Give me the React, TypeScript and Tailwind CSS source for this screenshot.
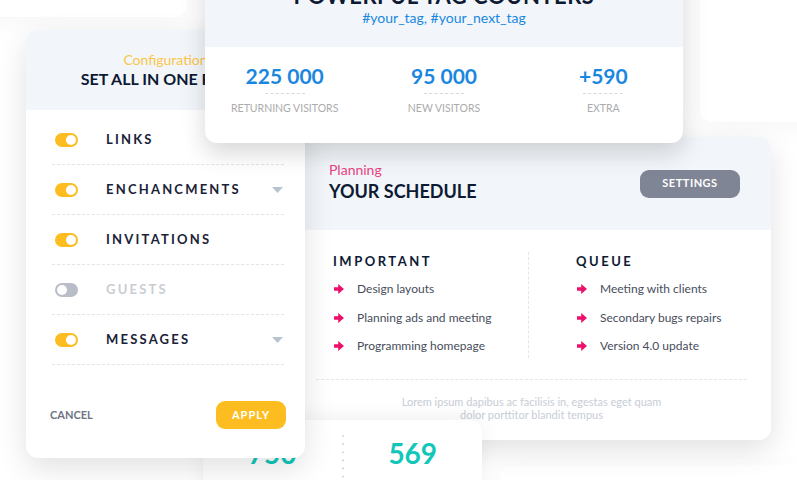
import React from "react";

const font = { fontFamily: "Lato, 'Open Sans', sans-serif" };

function Toggle({ on }: { on: boolean }) {
  return (
    <div
      className={`flex h-[14px] w-[23px] items-center rounded-full px-[2px] ${
        on ? "justify-end bg-[#fdbd21]" : "justify-start bg-[#b9bdc7]"
      }`}
    >
      <div className="h-[10px] w-[10px] rounded-full bg-white" />
    </div>
  );
}

function Caret() {
  return (
    <svg width="11" height="6" viewBox="0 0 11 6">
      <path d="M0 0 H11 L5.5 6 Z" fill="#b8c3cf" />
    </svg>
  );
}

function Arrow() {
  return (
    <svg width="10" height="10" viewBox="0 0 10 10" className="shrink-0">
      <path d="M0 3.3 H4.2 V0 L10 5 L4.2 10 V6.7 H0 Z" fill="#ec0f6c" />
    </svg>
  );
}

const rows = [
  { label: "LINKS", on: true, caret: false },
  { label: "ENCHANCMENTS", on: true, caret: true },
  { label: "INVITATIONS", on: true, caret: false },
  { label: "GUESTS", on: false, caret: false },
  { label: "MESSAGES", on: true, caret: true },
];

function Stat({ value, label }: { value: string; label: string }) {
  return (
    <div className="flex flex-1 flex-col items-center">
      <div className="text-[21px] font-bold leading-[28px] text-[#1a87df]">{value}</div>
      <div className="mt-[3px] w-[40px] border-t border-dashed border-[#d5d8dc]" />
      <div className="mt-[7px] text-[10.5px] leading-[14px] text-[#ababab]">{label}</div>
    </div>
  );
}

function Item({ text }: { text: string }) {
  return (
    <div className="flex items-center gap-[13px] pl-[1px] text-[12px] leading-[16px] text-[#474d5c]">
      <Arrow />
      <span>{text}</span>
    </div>
  );
}

export default function App() {
  return (
    <div className="relative h-[480px] w-[797px] overflow-hidden bg-white" style={font}>
      {/* faint background cards */}
      <div className="absolute left-[-40px] top-[-100px] h-[117px] w-[227px] rounded-[12px] bg-white shadow-[0_6px_24px_rgba(0,0,0,0.035)]" />
      <div className="absolute left-[700px] top-[-100px] h-[222px] w-[200px] rounded-[12px] bg-white shadow-[0_6px_24px_rgba(0,0,0,0.035)]" />
      <div className="absolute left-[500px] top-[465px] h-[100px] w-[330px] rounded-[12px] bg-white shadow-[0_6px_24px_rgba(0,0,0,0.035)]" />

      {/* schedule card */}
      <div className="absolute left-[292px] top-[137px] flex h-[303px] w-[479px] flex-col overflow-hidden rounded-[12px] bg-white shadow-[0_10px_30px_rgba(0,0,0,0.12)]">
        <div className="flex h-[93px] items-center justify-between bg-[#f2f6fa] pl-[37px] pr-[31px]">
          <div className="flex flex-col pb-[4px]">
            <div className="text-[14px] leading-[17px] text-[#ea4382]">Planning</div>
            <div className="mt-[2px] text-[18px] font-bold leading-[22px] text-[#0e1a33]">YOUR SCHEDULE</div>
          </div>
          <div className="flex h-[28px] w-[100px] items-center justify-center rounded-[9px] bg-[#7f8595] text-[11px] font-bold tracking-[0.5px] text-white">
            SETTINGS
          </div>
        </div>
        <div className="flex pl-[41px] pt-[22px]">
          <div className="flex w-[196px] flex-col border-r border-dashed border-[#e3e6ea] pb-[4px]">
            <div className="text-[13px] font-bold leading-[18px] tracking-[2.5px] text-[#0e1a33]">IMPORTANT</div>
            <div className="mt-[11px] flex flex-col gap-[12.5px]">
              {["Design layouts", "Planning ads and meeting", "Programming homepage"].map((t) => (
                <Item key={t} text={t} />
              ))}
            </div>
          </div>
          <div className="flex flex-col pl-[47px]">
            <div className="text-[13px] font-bold leading-[18px] tracking-[2.5px] text-[#0e1a33]">QUEUE</div>
            <div className="mt-[11px] flex flex-col gap-[12.5px]">
              {["Meeting with clients", "Secondary bugs repairs", "Version 4.0 update"].map((t) => (
                <Item key={t} text={t} />
              ))}
            </div>
          </div>
        </div>
        <div className="mx-[24px] mt-[21px] border-t border-dashed border-[#e3e6ea]" />
        <div className="mt-[15px] px-[100px] text-center text-[11px] leading-[13px] text-[#c7cdd6]">
          Lorem ipsum dapibus ac facilisis in, egestas eget quam
          <br />
          dolor porttitor blandit tempus
        </div>
      </div>

      {/* bottom card */}
      <div className="absolute left-[203px] top-[420px] flex h-[120px] w-[279px] rounded-[12px] bg-white shadow-[0_-4px_20px_rgba(0,0,0,0.06)]">
        <div className="flex flex-1 justify-center pt-[17px] text-[28px] font-bold leading-[32px] text-[#12c7b9]">
          750
        </div>
        <div className="pt-[15px]">
          <svg width="2" height="80" viewBox="0 0 2 80">
            <line x1="1" y1="1" x2="1" y2="80" stroke="#b7bfca" strokeWidth="1.6" strokeLinecap="round" strokeDasharray="0.1 8" />
          </svg>
        </div>
        <div className="flex flex-1 justify-center pt-[17px] text-[28px] font-bold leading-[32px] text-[#12c7b9]">
          569
        </div>
      </div>

      {/* config card */}
      <div className="absolute left-[26px] top-[30px] flex h-[428px] w-[279px] flex-col overflow-hidden rounded-[12px] bg-white shadow-[0_10px_30px_rgba(0,0,0,0.12)]">
        <div className="flex h-[80px] flex-col items-center justify-center bg-[#f2f6fa]">
          <div className="text-[14px] leading-[17px] text-[#fbc547]">Configuration</div>
          <div className="mt-[1px] text-[16px] font-bold leading-[20px] text-[#0e1a33]">SET ALL IN ONE PLACE</div>
        </div>
        <div className="ml-[26px] mr-[21px] mt-[5px] flex flex-col">
          {rows.map((r) => (
            <div key={r.label} className="flex h-[50px] items-center border-b border-dashed border-[#e1e4e8] pl-[3px] pr-[1px]">
              <Toggle on={r.on} />
              <div
                className={`ml-[28px] flex-1 text-[13px] font-bold tracking-[2.2px] ${
                  r.on ? "text-[#1a2238]" : "text-[#c9cdd3]"
                }`}
              >
                {r.label}
              </div>
              {r.caret && <Caret />}
            </div>
          ))}
        </div>
        <div className="mt-auto mb-[29px] flex items-center justify-between pl-[24px] pr-[19px]">
          <div className="text-[11px] font-bold text-[#6f7483]">CANCEL</div>
          <div className="flex h-[28px] w-[70px] items-center justify-center rounded-[9px] bg-[#fdbd21] text-[11px] font-bold tracking-[1px] text-white">
            APPLY
          </div>
        </div>
      </div>

      {/* counters card */}
      <div className="absolute left-[205px] top-[-60px] flex h-[203px] w-[478px] flex-col overflow-hidden rounded-[12px] bg-white shadow-[0_10px_25px_rgba(0,0,0,0.16)]">
        <div className="flex h-[107px] flex-col items-center justify-end bg-[#f2f6fa] pb-[20px]">
          <div className="text-[22px] font-bold leading-[24px] tracking-[0.5px] text-[#0e1a33]">POWERFUL TAG COUNTERS</div>
          <div className="mt-[1px] text-[14px] leading-[18px] text-[#1a87df]">#your_tag, #your_next_tag</div>
        </div>
        <div className="flex pt-[15px]">
          <Stat value="225 000" label="RETURNING VISITORS" />
          <Stat value="95 000" label="NEW VISITORS" />
          <Stat value="+590" label="EXTRA" />
        </div>
      </div>
    </div>
  );
}
